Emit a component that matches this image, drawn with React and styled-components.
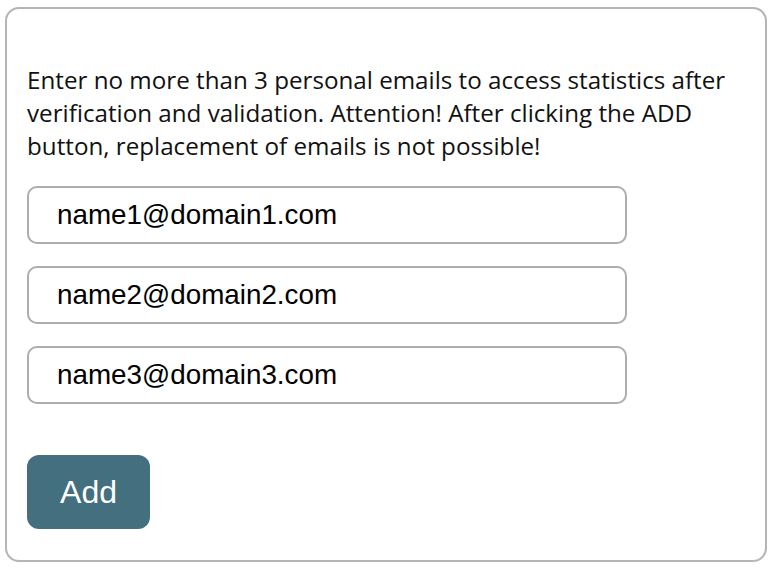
import React from "react";
import styled, { createGlobalStyle } from "styled-components";

const Global = createGlobalStyle`
  html, body { margin: 0; padding: 0; background: #ffffff; }
  * { box-sizing: border-box; }
`;

const Page = styled.div`
  padding: 7px 0 0 5px;
`;

const Card = styled.section`
  width: 762px;
  height: 555px;
  border: 2px solid #b6b4b6;
  border-radius: 14px;
  padding: 54px 20px 0 20px;
  background: #fff;
`;

const Notice = styled.p`
  margin: 0;
  font-family: "Open Sans", "Noto Sans", sans-serif;
  font-size: 24.2px;
  line-height: 33px;
  color: #111;
  width: 715px;
`;

const Fields = styled.div`
  display: flex;
  flex-direction: column;
  gap: 22px;
  margin-top: 24px;
`;

const EmailInput = styled.input`
  width: 600px;
  height: 58px;
  border: 2px solid #adadad;
  border-radius: 10px;
  padding: 0 0 0 28px;
  font-family: "Liberation Sans", Arial, sans-serif;
  font-size: 27.8px;
  color: #000;
  background: #fff;
  outline: none;
`;

const AddButton = styled.button`
  margin-top: 51px;
  width: 123px;
  height: 74px;
  border: none;
  border-radius: 12px;
  background: #436f7f;
  color: #fff;
  font-family: "Liberation Sans", Arial, sans-serif;
  font-size: 32px;
  padding: 0;
  cursor: pointer;
`;

const emails = ["name1@domain1.com", "name2@domain2.com", "name3@domain3.com"];

export default function App() {
  return (
    <>
      <Global />
      <Page>
        <Card>
          <Notice>
            Enter no more than 3 personal emails to access statistics after
            verification and validation. Attention! After clicking the ADD
            button, replacement of emails is not possible!
          </Notice>
          <Fields>
            {emails.map((e) => (
              <EmailInput key={e} type="email" defaultValue={e} readOnly />
            ))}
          </Fields>
          <AddButton>Add</AddButton>
        </Card>
      </Page>
    </>
  );
}
